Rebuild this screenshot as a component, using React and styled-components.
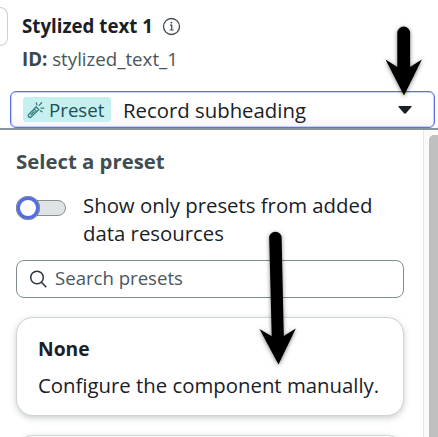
import React from "react";
import styled, { createGlobalStyle } from "styled-components";

const GlobalStyle = createGlobalStyle`
  * { box-sizing: border-box; }
  body {
    margin: 0;
    background: #fff;
    color: #192127;
    font-family: "Open Sans", "Noto Sans", sans-serif;
    overflow: hidden;
  }
  p, h1, h2, h3 { margin: 0; font-weight: 400; }
`;

const Screen = styled.main`
  position: relative;
  display: flex;
  flex-direction: column;
  width: 438px;
  height: 437px;
  overflow: hidden;
`;

const Header = styled.header`
  display: flex;
  height: 91px;
`;

const CardEdge = styled.div`
  width: 8px;
  height: 39px;
  margin-top: 7px;
  border: 1px solid #c9d0d0;
  border-left: 0;
  border-radius: 0 9px 9px 0;
`;

const Identity = styled.div`
  display: flex;
  flex-direction: column;
  padding: 12px 0 0 14px;
`;

const TitleRow = styled.div`
  display: flex;
  align-items: center;
  gap: 9px;
  height: 28px;
`;

const Title = styled.h1`
  font-size: 18.7px;
  line-height: 28px;
  font-weight: 700;
  white-space: nowrap;
`;

const ComponentId = styled.p`
  margin-top: 5px;
  font-size: 18.7px;
  line-height: 28px;
  color: #4a565b;
  white-space: nowrap;
  b { font-weight: 700; color: #3a464b; }
`;

const Select = styled.div`
  display: flex;
  align-items: center;
  flex: none;
  width: 425px;
  height: 37px;
  margin-left: 10px;
  padding: 0 22px 0 12px;
  border: 1px solid #5a70e6;
  border-radius: 6px;
  box-shadow: inset 0 0 0 1px rgba(90, 112, 230, 0.3);
  background: linear-gradient(#fff 65%, #f5f5f6);
`;

const Badge = styled.span`
  display: flex;
  align-items: center;
  width: 88px;
  height: 25px;
  padding-left: 4px;
  gap: 4px;
  border-radius: 3px;
  background: #c6f0f0;
  color: #204f55;
  font-size: 18.7px;
  line-height: 23px;
`;

const SelectValue = styled.span`
  flex: 1;
  margin-left: 12px;
  font-size: 20.35px;
  line-height: 30px;
  white-space: nowrap;
`;

const Menu = styled.section`
  display: flex;
  flex: none;
  height: 309px;
  border-top: 2px solid #8794a0;
`;

const MenuBody = styled.div`
  display: flex;
  flex-direction: column;
  width: 423px;
  padding: 17px 20px 0 16px;
`;

const MenuTitle = styled.h2`
  font-size: 20.35px;
  line-height: 28px;
  font-weight: 700;
  color: #414d52;
  white-space: nowrap;
`;

const ToggleRow = styled.div`
  display: flex;
  height: 56px;
  margin-top: 16px;
`;

const ToggleTrack = styled.div`
  display: flex;
  align-items: center;
  width: 50px;
  height: 16px;
  margin-top: 9px;
  border: 1px solid #83908f;
  border-radius: 8px;
  background: #dfe3e5;
`;

const ToggleKnob = styled.div`
  width: 24px;
  height: 24px;
  flex: none;
  margin-left: -1px;
  border: 4px solid #536be5;
  border-radius: 50%;
  outline: 1px solid #849094;
  outline-offset: -1px;
  background: #fff;
`;

const ToggleLabel = styled.p`
  margin-left: 17px;
  font-size: 20.35px;
  line-height: 28px;
  white-space: nowrap;
`;

const Search = styled.div`
  display: flex;
  align-items: center;
  flex: none;
  width: 388px;
  height: 38px;
  margin-top: 13px;
  padding: 0 0 1px 12px;
  gap: 6px;
  border: 1px solid #7f8d90;
  border-radius: 8px;
  color: #4b575d;
  font-size: 18.6px;
`;

const SearchHint = styled.span`
  padding-bottom: 2px;
`;

const Option = styled.article`
  flex: none;
  width: 388px;
  height: 99px;
  margin-top: 19px;
  padding: 17px 0 0 21px;
  border: 1px solid #ced5d7;
  border-radius: 17px;
  background: #fff;
  box-shadow: 0 2px 6px rgba(30, 40, 45, 0.24);
`;

const OptionTitle = styled.h3`
  font-size: 19.3px;
  line-height: 28px;
  font-weight: 700;
`;

const OptionText = styled.p`
  margin-top: 8px;
  font-size: 20.35px;
  line-height: 28px;
  white-space: nowrap;
`;

const Scrollbar = styled.div`
  width: 15px;
  padding: 5px 0 0 5px;
  border-left: 1px solid #e6e6e6;
  background: #fafafa;
`;

const ScrollThumb = styled.div`
  height: 320px;
  border-radius: 5px 0 0 0;
  background: #c0c0c0;
`;

const Annotations = styled.svg`
  position: absolute;
  inset: 0;
  pointer-events: none;
  filter: drop-shadow(0 1px 2px rgba(0, 0, 0, 0.5));
`;

const InfoIcon = () => (
  <svg width="19" height="19" viewBox="0 0 19 19" fill="none" stroke="#3e494e">
    <circle cx="9.5" cy="9.5" r="8" strokeWidth="1.3" />
    <path d="M8 8.2h1.7v4.7M7.7 13h4" strokeWidth="1.2" />
    <circle cx="9.4" cy="5.6" r=".9" fill="#3e494e" stroke="none" />
  </svg>
);

const WandIcon = () => (
  <svg width="18" height="18" viewBox="0 0 18 18" fill="none" stroke="#34777b" strokeWidth="1.3" strokeLinecap="round">
    <path d="M1.5 13.6 9.2 6l2.5 2.5L4 16.1q-1.1.8-2.2-.3-1.1-1.1-.3-2.2Z" />
    <path d="m7.1 8.1 2.5 2.5M4 13.8l3-3M9.3 1.8l.5 2M14.6 1.6l-2.3 2.7M14 7.1h2.7M13.3 9.7l1.8 1" />
  </svg>
);

const SearchIcon = () => (
  <svg width="20" height="20" viewBox="0 0 20 20" fill="none" stroke="#29343a" strokeWidth="1.5">
    <circle cx="8" cy="8.5" r="6.3" />
    <path d="m12.5 13.3 4.8 5" />
  </svg>
);

const CaretIcon = () => (
  <svg width="14" height="8" viewBox="0 0 14 8">
    <path d="M.7 0h12.6q.6.4.1 1L8 7.3q-1 .9-2 0L.6 1Q.1.4.7 0Z" fill="#192127" />
  </svg>
);

export default function App() {
  return (
    <Screen>
      <GlobalStyle />
      <Header>
        <CardEdge />
        <Identity>
          <TitleRow>
            <Title>Stylized text 1</Title>
            <InfoIcon />
          </TitleRow>
          <ComponentId><b>ID:</b> stylized_text_1</ComponentId>
        </Identity>
      </Header>
      <Select>
        <Badge><WandIcon />Preset</Badge>
        <SelectValue>Record subheading</SelectValue>
        <CaretIcon />
      </Select>
      <Menu>
        <MenuBody>
          <MenuTitle>Select a preset</MenuTitle>
          <ToggleRow>
            <ToggleTrack><ToggleKnob /></ToggleTrack>
            <ToggleLabel>Show only presets from added<br />data resources</ToggleLabel>
          </ToggleRow>
          <Search><SearchIcon /><SearchHint>Search presets</SearchHint></Search>
          <Option>
            <OptionTitle>None</OptionTitle>
            <OptionText>Configure the component manually.</OptionText>
          </Option>
          <Option />
        </MenuBody>
        <Scrollbar><ScrollThumb /></Scrollbar>
      </Menu>
      <Annotations width="438" height="437" viewBox="0 0 438 437">
        <path d="M397.3 33a6.4 6.4 0 0 1 12.8 0v34l11.8-7.5L404 95.5 385.5 59.5 397.3 67Z" />
        <path d="M269.2 238a6.2 6.2 0 0 1 12.4 0l2.2 98 12-7.5L278.5 364.5 259.5 329l12.2 7.2Z" />
      </Annotations>
    </Screen>
  );
}
